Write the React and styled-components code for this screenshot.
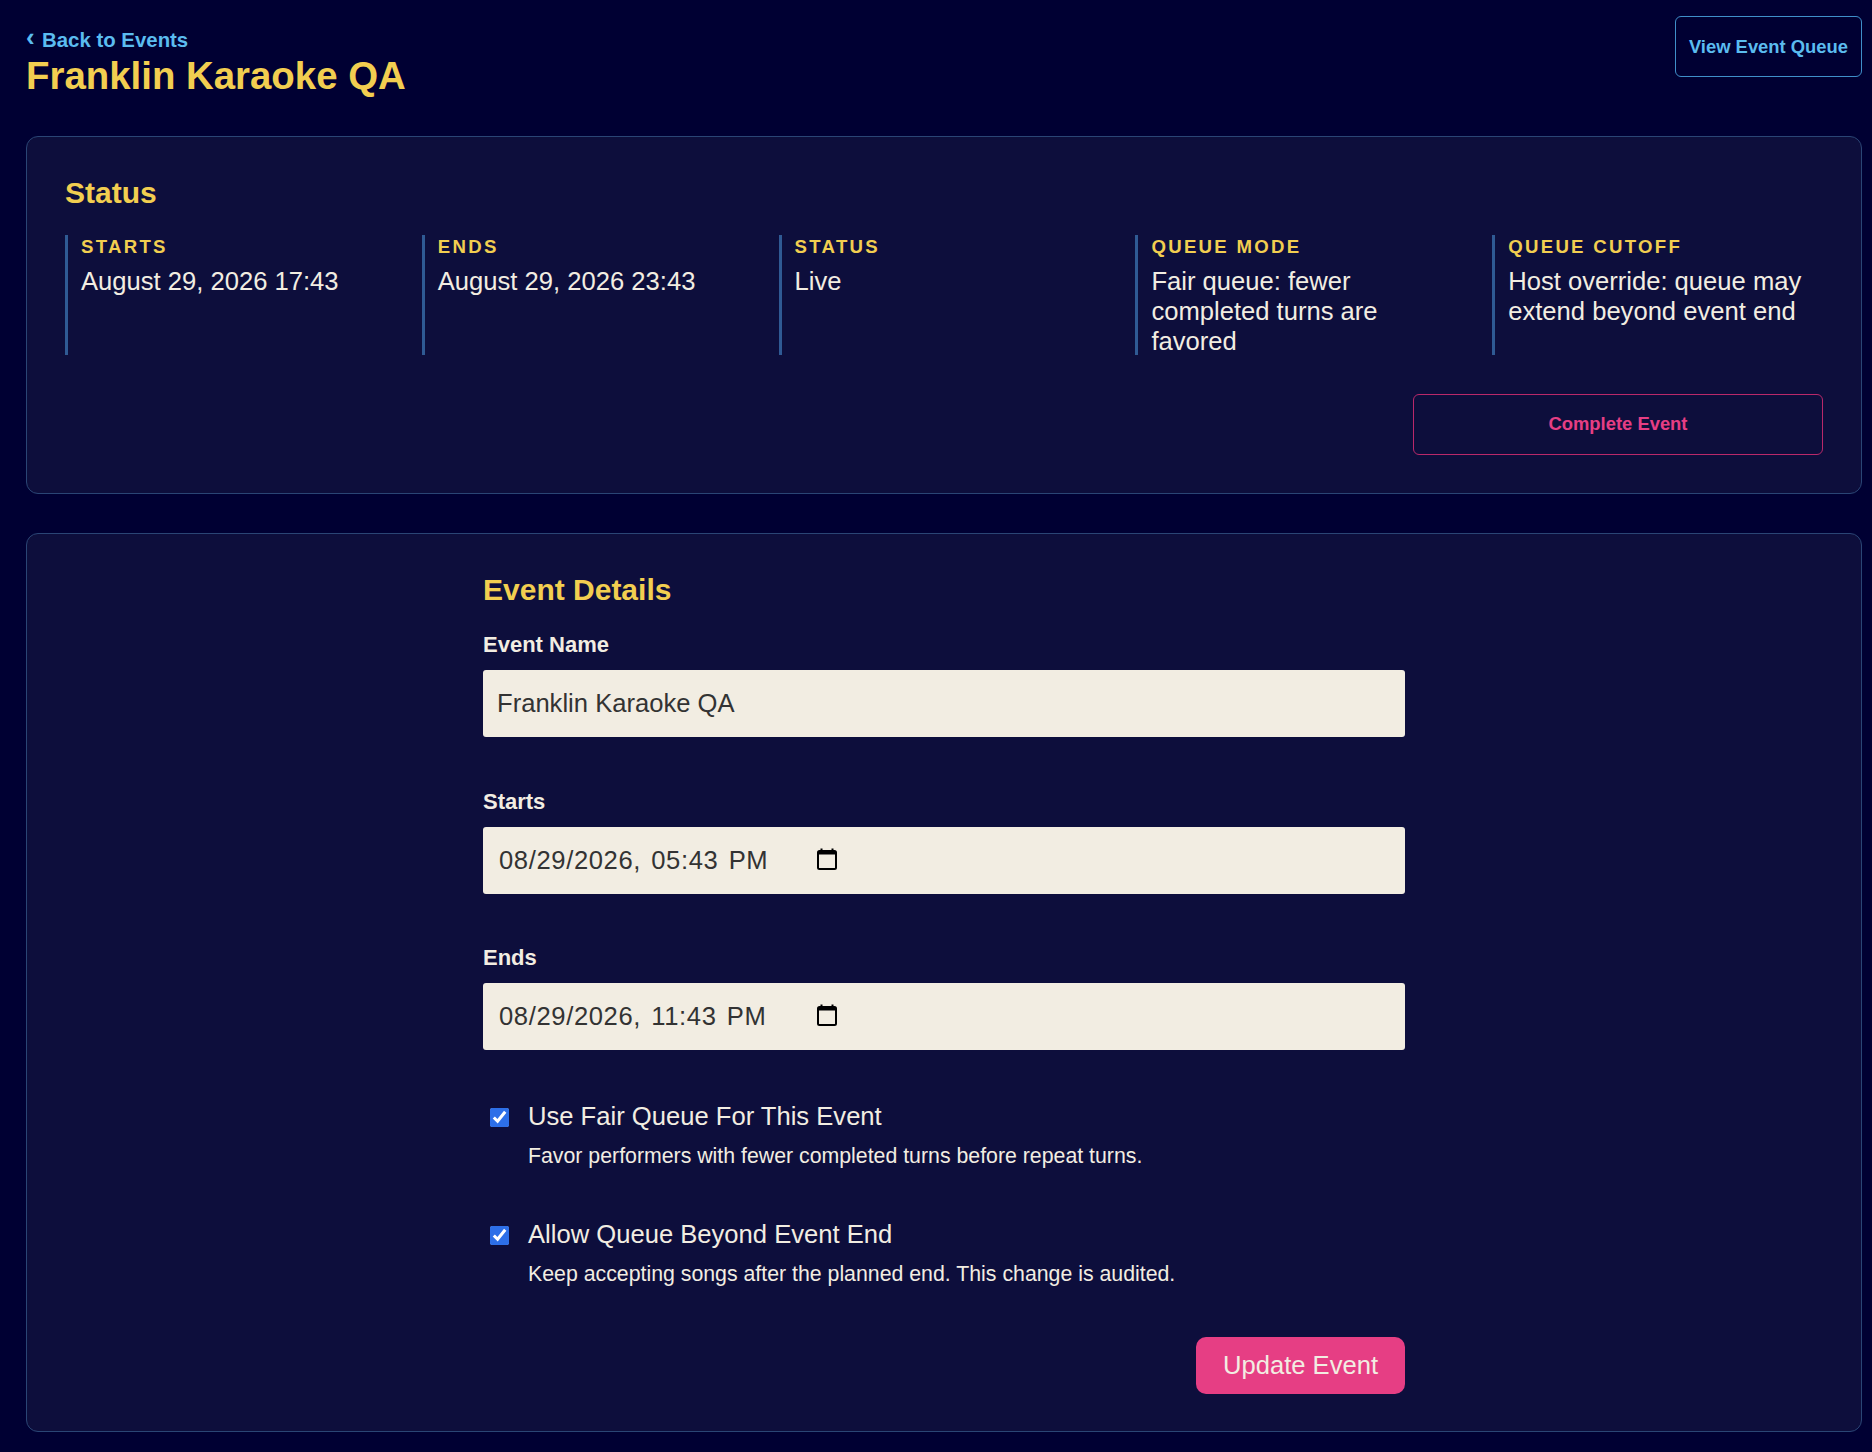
import React from 'react'
import styled, { createGlobalStyle } from 'styled-components'

const FONT = `"Liberation Sans", Arial, Helvetica, sans-serif`

const stats = [
  { label: 'Starts', value: 'August 29, 2026 17:43' },
  { label: 'Ends', value: 'August 29, 2026 23:43' },
  { label: 'Status', value: 'Live' },
  { label: 'Queue Mode', value: 'Fair queue: fewer completed turns are favored' },
  { label: 'Queue Cutoff', value: 'Host override: queue may extend beyond event end' },
]

const CalendarIcon = () => (
  <CalendarSvgStyled width="20" height="22" viewBox="0 0 20 22" fill="none" aria-hidden="true">
    <rect x="1" y="3" width="18" height="18" rx="1.5" stroke="#000" strokeWidth="2" />
    <rect x="1" y="3" width="18" height="3.5" fill="#000" />
    <rect x="3.5" y="0.5" width="2" height="3" fill="#000" />
    <rect x="14.5" y="0.5" width="2" height="3" fill="#000" />
  </CalendarSvgStyled>
)

const App = () => {
  return (
    <PageStyled>
      <GlobalStyle />
      <HeaderStyled>
        <div>
          <BackLinkStyled href="#">
            <ChevronStyled>‹</ChevronStyled> Back to Events
          </BackLinkStyled>
          <TitleStyled>Franklin Karaoke QA</TitleStyled>
        </div>
        <QueueButtonStyled>View Event Queue</QueueButtonStyled>
      </HeaderStyled>

      <CardStyled $pad="38px 38px 38px">
        <SectionTitleStyled>Status</SectionTitleStyled>
        <StatsGridStyled>
          {stats.map((s) => (
            <StatStyled key={s.label}>
              <StatLabelStyled>{s.label}</StatLabelStyled>
              <StatValueStyled>{s.value}</StatValueStyled>
            </StatStyled>
          ))}
        </StatsGridStyled>
        <CardActionsStyled>
          <CompleteButtonStyled>Complete Event</CompleteButtonStyled>
        </CardActionsStyled>
      </CardStyled>

      <CardStyled $pad="38px 38px 37px">
        <FormStyled onSubmit={(e) => e.preventDefault()}>
          <SectionTitleStyled>Event Details</SectionTitleStyled>

          <FieldStyled>
            <FieldLabelStyled>Event Name</FieldLabelStyled>
            <TextInputStyled defaultValue="Franklin Karaoke QA" />
          </FieldStyled>

          <FieldStyled>
            <FieldLabelStyled>Starts</FieldLabelStyled>
            <DateFieldStyled>
              <DateTextStyled>08/29/2026, 05:43 PM</DateTextStyled>
              <CalendarIcon />
            </DateFieldStyled>
          </FieldStyled>

          <FieldStyled>
            <FieldLabelStyled>Ends</FieldLabelStyled>
            <DateFieldStyled>
              <DateTextStyled>08/29/2026, 11:43 PM</DateTextStyled>
              <CalendarIcon />
            </DateFieldStyled>
          </FieldStyled>

          <OptionStyled>
            <CheckboxStyled type="checkbox" defaultChecked />
            <span>
              <OptionTitleStyled>Use Fair Queue For This Event</OptionTitleStyled>
              <OptionHintStyled>
                Favor performers with fewer completed turns before repeat turns.
              </OptionHintStyled>
            </span>
          </OptionStyled>

          <OptionStyled>
            <CheckboxStyled type="checkbox" defaultChecked />
            <span>
              <OptionTitleStyled>Allow Queue Beyond Event End</OptionTitleStyled>
              <OptionHintStyled>
                Keep accepting songs after the planned end. This change is audited.
              </OptionHintStyled>
            </span>
          </OptionStyled>

          <FormActionsStyled>
            <SubmitButtonStyled type="submit">Update Event</SubmitButtonStyled>
          </FormActionsStyled>
        </FormStyled>
      </CardStyled>
    </PageStyled>
  )
}

const GlobalStyle = createGlobalStyle`
  html, body {
    margin: 0;
    padding: 0;
    background: #000033;
  }
  * {
    box-sizing: border-box;
  }
`

const PageStyled = styled.div`
  min-height: 1452px;
  padding: 16px 10px 20px 26px;
  font-family: ${FONT};
  color: #f2ede2;
`

const HeaderStyled = styled.header`
  display: flex;
  justify-content: space-between;
  align-items: flex-start;
  height: 120px;
`

const BackLinkStyled = styled.a`
  display: block;
  margin-top: 12px;
  font-size: 20.4px;
  line-height: 24px;
  font-weight: 700;
  color: #5bbcf0;
  text-decoration: none;
`

const ChevronStyled = styled.span`
  display: inline-block;
  margin-right: 1.7px;
  font-size: 26px;
  line-height: 0;
  position: relative;
  top: -1.5px;
`

const TitleStyled = styled.h1`
  margin: 2px 0 0;
  font-size: 38.4px;
  line-height: 44px;
  font-weight: 700;
  color: #f2ce50;
`

const QueueButtonStyled = styled.button`
  width: 187px;
  height: 61px;
  padding: 0;
  font-family: ${FONT};
  font-size: 18.4px;
  font-weight: 700;
  color: #5bbcf0;
  background: transparent;
  border: 1px solid #3f8fc9;
  border-radius: 6px;
`

const CardStyled = styled.section`
  padding: ${(p) => p.$pad};
  margin-bottom: 39px;
  background: #0d0e3c;
  border: 1px solid #2a4575;
  border-radius: 12px;

  &:last-child {
    margin-bottom: 0;
  }
`

const SectionTitleStyled = styled.h2`
  margin: 0;
  font-size: 30px;
  line-height: 36px;
  font-weight: 700;
  color: #f2ce50;
`

const StatsGridStyled = styled.div`
  display: grid;
  grid-template-columns: repeat(5, 1fr);
  column-gap: 26px;
  margin-top: 24px;
`

const StatStyled = styled.div`
  height: 120px;
  padding-left: 13px;
  border-left: 3px solid #2f5a94;
`

const StatLabelStyled = styled.div`
  margin-top: 1px;
  font-size: 18.6px;
  line-height: 22px;
  font-weight: 700;
  letter-spacing: 2.3px;
  text-transform: uppercase;
  color: #f2ce50;
`

const StatValueStyled = styled.div`
  margin-top: 8.4px;
  font-size: 25.6px;
  line-height: 30px;
  color: #f2ede2;
`

const CardActionsStyled = styled.div`
  display: flex;
  justify-content: flex-end;
  margin-top: 39px;
`

const CompleteButtonStyled = styled.button`
  width: 410px;
  height: 61px;
  padding: 0 0 2px;
  font-family: ${FONT};
  font-size: 18.4px;
  font-weight: 700;
  color: #e63e84;
  background: transparent;
  border: 1px solid #b9286a;
  border-radius: 6px;
`

const FormStyled = styled.form`
  width: 922px;
  margin: 0 auto;
`

const FieldStyled = styled.div`
  margin-top: 21.5px;
  margin-bottom: 49px;
  padding-top: 2.5px;
`

const FieldLabelStyled = styled.label`
  display: block;
  margin-bottom: 12px;
  font-size: 22px;
  line-height: 26px;
  font-weight: 700;
  color: #f2ede2;
`

const TextInputStyled = styled.input`
  display: block;
  width: 100%;
  height: 67px;
  padding: 0 14px;
  font-family: ${FONT};
  font-size: 25.6px;
  color: #333333;
  background: #f2ede2;
  border: none;
  border-radius: 3px;
  outline: none;
`

const DateFieldStyled = styled.div`
  display: flex;
  align-items: center;
  height: 67px;
  padding: 0 16px;
  background: #f2ede2;
  border-radius: 3px;
`

const DateTextStyled = styled.span`
  width: 318px;
  font-size: 25.6px;
  letter-spacing: 0.62px;
  word-spacing: 2.5px;
  color: #333333;
  white-space: nowrap;
`

const CalendarSvgStyled = styled.svg`
  flex: none;
  margin-bottom: 3px;
`

const OptionStyled = styled.label`
  display: flex;
  align-items: flex-start;
  gap: 19px;
  margin-top: 51px;
  margin-bottom: 51px;
  padding-left: 7px;
`

const CheckboxStyled = styled.input`
  width: 19px;
  height: 19px;
  margin: 7px 0 0;
  flex: none;
  accent-color: #2d6fe8;
`

const OptionTitleStyled = styled.span`
  display: block;
  font-size: 25.6px;
  line-height: 30px;
  color: #f2ede2;
`

const OptionHintStyled = styled.span`
  display: block;
  margin-top: 13px;
  font-size: 21.3px;
  line-height: 24px;
  color: #f2ede2;
`

const FormActionsStyled = styled.div`
  display: flex;
  justify-content: flex-end;
  margin-top: 51px;
`

const SubmitButtonStyled = styled.button`
  width: 209px;
  height: 57px;
  padding: 0;
  font-family: ${FONT};
  font-size: 25.6px;
  color: #f2ede2;
  background: #e63e84;
  border: none;
  border-radius: 10px;
`

export default App
